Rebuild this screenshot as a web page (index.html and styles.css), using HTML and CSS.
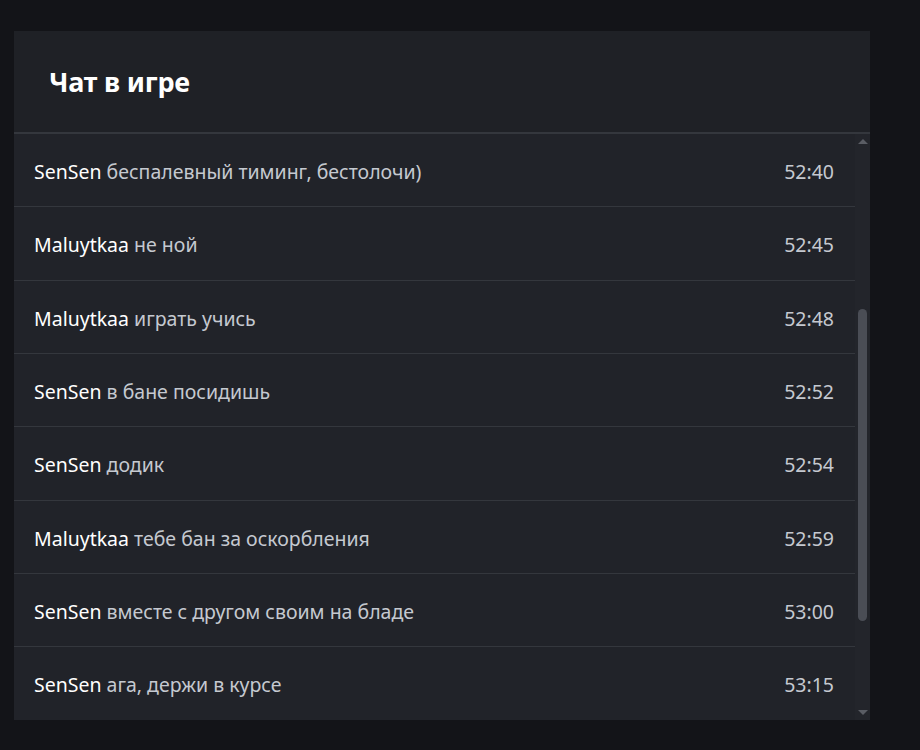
FILE: index.html
```html
<!DOCTYPE html>
<html lang="ru">
<head>
<meta charset="utf-8">
<title>Чат в игре</title>
<link rel="stylesheet" href="styles.css">
</head>
<body>
<section class="chat-panel">
  <header class="chat-header">
    <h2 class="chat-title">Чат в игре</h2>
  </header>
  <div class="chat-body">
    <ul class="chat-list">
      <li class="chat-row"><p class="chat-text"><span class="chat-name">SenSen</span> беспалевный тиминг, бестолочи)</p><span class="chat-time">52:40</span></li>
      <li class="chat-row"><p class="chat-text"><span class="chat-name">Maluytkaa</span> не ной</p><span class="chat-time">52:45</span></li>
      <li class="chat-row"><p class="chat-text"><span class="chat-name">Maluytkaa</span> играть учись</p><span class="chat-time">52:48</span></li>
      <li class="chat-row"><p class="chat-text"><span class="chat-name">SenSen</span> в бане посидишь</p><span class="chat-time">52:52</span></li>
      <li class="chat-row"><p class="chat-text"><span class="chat-name">SenSen</span> додик</p><span class="chat-time">52:54</span></li>
      <li class="chat-row"><p class="chat-text"><span class="chat-name">Maluytkaa</span> тебе бан за оскорбления</p><span class="chat-time">52:59</span></li>
      <li class="chat-row"><p class="chat-text"><span class="chat-name">SenSen</span> вместе с другом своим на бладе</p><span class="chat-time">53:00</span></li>
      <li class="chat-row"><p class="chat-text"><span class="chat-name">SenSen</span> ага, держи в курсе</p><span class="chat-time">53:15</span></li>
    </ul>
    <div class="scrollbar" aria-hidden="true">
      <span class="scrollbar-btn"><span class="arrow-up"></span></span>
      <span class="scrollbar-thumb"></span>
      <span class="scrollbar-btn scrollbar-btn-end"><span class="arrow-down"></span></span>
    </div>
  </div>
</section>
</body>
</html>
```

FILE: styles.css
```css
html, body {
  margin: 0;
  padding: 0;
}

body {
  background: #131418;
  font-family: "Noto Sans", "Open Sans", sans-serif;
  color: #c5c9d0;
  padding: 31px 0 0 14px;
  height: 750px;
  box-sizing: border-box;
}

.chat-panel {
  width: 856px;
  height: 689px;
  background: #212329;
  display: flex;
  flex-direction: column;
}

.chat-header {
  flex: 0 0 auto;
  height: 103px;
  box-sizing: border-box;
  padding: 0 35px;
  display: flex;
  align-items: center;
  background: #1f2126;
  border-bottom: 2px solid #34373d;
}

.chat-title {
  margin: 0;
  font-size: 27px;
  font-weight: 700;
  color: #ffffff;
  letter-spacing: -0.2px;
}

.chat-body {
  flex: 1 1 auto;
  min-height: 0;
  display: flex;
}

.chat-list {
  flex: 1 1 auto;
  margin: 0;
  padding: 0;
  list-style: none;
  overflow: hidden;
}

.chat-row {
  display: flex;
  align-items: center;
  justify-content: space-between;
  height: 73.33px;
  box-sizing: border-box;
  padding: 4px 21px 0 20px;
  border-bottom: 1px solid #34373d;
}

.chat-text {
  margin: 0;
  font-size: 19.5px;
  line-height: 28px;
  color: #c5c9d0;
}

.chat-name {
  color: #ffffff;
}

.chat-time {
  font-size: 19.5px;
  line-height: 28px;
  color: #c5c9d0;
}

/* vertical scrollbar beside the message list */
.scrollbar {
  flex: 0 0 15px;
  display: flex;
  flex-direction: column;
  align-items: center;
  background: #23252b;
}

.scrollbar-btn {
  flex: 0 0 15px;
  width: 15px;
  display: flex;
  align-items: center;
  justify-content: center;
}

.scrollbar-btn-end {
  margin-top: auto;
}

.arrow-up {
  width: 0;
  height: 0;
  border-left: 5px solid transparent;
  border-right: 5px solid transparent;
  border-bottom: 5px solid #5a5d64;
}

.arrow-down {
  width: 0;
  height: 0;
  border-left: 5px solid transparent;
  border-right: 5px solid transparent;
  border-top: 5px solid #5a5d64;
}

.scrollbar-thumb {
  margin-top: 160px;
  width: 9px;
  height: 312px;
  border-radius: 5px;
  background: #4a4d55;
}
```
